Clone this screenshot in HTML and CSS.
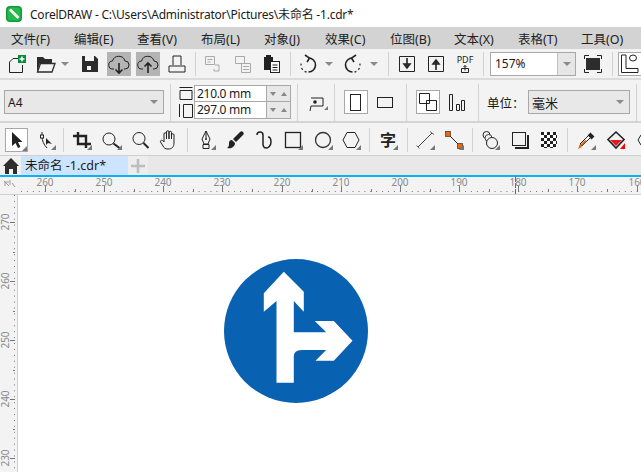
FILE: index.html
```html
<!DOCTYPE html>
<html lang="zh">
<head>
<meta charset="utf-8">
<title>CorelDRAW</title>
<link rel="stylesheet" href="styles.css">
</head>
<body>
<svg class="defs" width="0" height="0">
  <symbol id="corner" viewBox="0 0 5 5"><path d="M5 0V5H0Z"/></symbol>
</svg>
<header class="titlebar">
  <svg class="logo" width="16" height="16" viewBox="0 0 16 16"><rect width="16" height="16" rx="4" fill="#0f9d3a"/><rect x="1.5" y="1.5" width="13" height="13" rx="3" fill="#27b84f"/><path d="M4 3.5 12.5 12" stroke="#fff" stroke-width="2.6"/><path d="M4 3.5 12.5 12" stroke="#cfd8cf" stroke-width=".7"/></svg>
  <span class="title">CorelDRAW - C:\Users\Administrator\Pictures\未命名 -1.cdr*</span>
</header>
<nav class="menubar">
  <span class="m1">文件(F)</span><span class="m2">编辑(E)</span><span class="m3">查看(V)</span><span class="m4">布局(L)</span><span class="m5">对象(J)</span><span class="m6">效果(C)</span><span class="m7">位图(B)</span><span class="m8">文本(X)</span><span class="m9">表格(T)</span><span class="m10">工具(O)</span>
</nav>
<div class="toolbar std">
  <svg class="ic w24" viewBox="0 0 24 24"><path d="M5.500 10 9 6.500h6M5.500 10v10.500h13V13" class="ln"/><rect x="14" y="3" width="8" height="8" fill="#0a8a3a"/><path d="M18 4.500v5M15.500 7h5" stroke="#fff" stroke-width="1.500"/></svg>
  <svg class="ic w24 g5" viewBox="0 0 24 24"><path d="M4 20V5h6l2 2h7v4H7L4 20Z" fill="#2b2b2b"/><path d="M4.500 20 7.500 11.500H22l-3 8.500Z" fill="#f3f3f3" stroke="#2b2b2b" stroke-width="1.300"/></svg>
  <svg class="ic w8 g4" viewBox="0 0 8 24"><path d="M0 10h8l-4 4Z" fill="#8a8a8a"/></svg>
  <svg class="ic w24 g9" viewBox="0 0 24 24"><path d="M4 4h13l3 3v13H4Z" fill="#2b2b2b"/><rect x="7" y="4" width="9" height="5" fill="#f3f3f3"/><rect x="9" y="14" width="4" height="4" fill="#f3f3f3"/></svg>
  <span class="on g5"><svg class="ic w24" viewBox="0 0 24 24"><path d="M7 17H6a4 4 0 0 1-.5-8 6.500 6.500 0 0 1 12.500 0 4 4 0 0 1 0 8h-1" class="ln"/><path d="M12 11v10m-3.500-3.500 3.500 3.500 3.500-3.500" class="ln2"/></svg></span>
  <span class="on g5"><svg class="ic w24" viewBox="0 0 24 24"><path d="M7 17H6a4 4 0 0 1-.5-8 6.500 6.500 0 0 1 12.500 0 4 4 0 0 1 0 8h-1" class="ln"/><path d="M12 21V11m-3.500 3.500 3.500-3.500 3.500 3.500" class="ln2"/></svg></span>
  <svg class="ic w24 g5" viewBox="0 0 24 24"><path d="M8 13V4h8v9M4 14h16v6H4Z" class="ln"/></svg>
  <i class="sep s1"></i>
  <svg class="ic w24 dim" viewBox="0 0 24 24"><path d="M5.500 4.500h9v8h-9zM7.500 7.500h5M7.500 10h3M15 13h4v6h-5v-2" class="ln"/></svg>
  <svg class="ic w24 g7 dim" viewBox="0 0 24 24"><path d="M4.500 4.500h9v7h-9zM10.500 11.500h9v9h-9zM12 14.500h6M12 17.500h6" class="ln"/></svg>
  <svg class="ic w24 g5" viewBox="0 0 24 24"><path d="M4 5h9v13H4Z" fill="#222"/><rect x="6" y="3" width="5" height="3" fill="#222"/><rect x="10.500" y="9.500" width="9" height="11" fill="#fff" stroke="#222"/><path d="M12.500 13h5M12.500 15.500h5M12.500 18h5" stroke="#222"/></svg>
  <i class="sep s2"></i>
  <svg class="ic w24" viewBox="0 0 24 24"><path d="M12.500 6a7 7 0 0 1 0 14" class="ln2"/><path d="M10.500 20a7 7 0 0 1-5-9.500" fill="none" stroke="#333" stroke-width="1.300" stroke-dasharray="2 2.500"/><path d="M9 3l4.500 3.200L11 10" class="ln2"/></svg>
  <svg class="ic w8 g5" viewBox="0 0 8 24"><path d="M0 10h8l-4 4Z" fill="#8a8a8a"/></svg>
  <svg class="ic w24 g8" viewBox="0 0 24 24"><path d="M11.500 6a7 7 0 0 0 0 14" class="ln2"/><path d="M13.500 20a7 7 0 0 0 5-9.500" fill="none" stroke="#333" stroke-width="1.300" stroke-dasharray="2 2.500"/><path d="M15 3l-4.500 3.200L13 10" class="ln2"/></svg>
  <svg class="ic w8 g5" viewBox="0 0 8 24"><path d="M0 10h8l-4 4Z" fill="#8a8a8a"/></svg>
  <i class="sep s3"></i>
  <svg class="ic w24" viewBox="0 0 24 24"><path d="M4.500 4.500h15v15h-15z" class="ln"/><path d="M12 6v9M9 12h6l-3 4Z" class="ln2"/></svg>
  <svg class="ic w24 g5" viewBox="0 0 24 24"><path d="M4.500 4.500h15v15h-15z" class="ln"/><path d="M12 18V9M9 12h6l-3-4Z" class="ln2"/></svg>
  <span class="pdf g5"><span>PDF</span><svg width="8" height="8" viewBox="0 0 8 8"><path d="M.5 3.500h7v4h-7zM4 .5v5M2.500 2 4 .5 5.500 2" class="ln"/></svg></span>
  <i class="sep s4"></i>
  <span class="zoom"><span class="val">157%</span><span class="drop"></span></span>
  <svg class="ic w24 g5" viewBox="0 0 24 24"><rect x="5" y="6" width="14" height="12" fill="#2d2d2d"/><path d="M3.500 7V3.500H8M16 3.500h4.500V7M3.500 17v3.500H8M16 20.500h4.500V17" class="ln"/></svg>
  <i class="sep s5"></i>
  <span class="rulerbtn"><svg width="24" height="24" viewBox="0 0 24 24"><path d="M3.500 3v17.500H20v-4H8V3Z" class="ln"/><path d="M11.500 6a3.500 3 0 0 1 7 0 3.500 3 0 0 1-7 0Z" class="ln"/></svg></span>
</div>
<div class="toolbar prop">
  <span class="combo a4"><span>A4</span><b></b></span>
  <i class="sep s6"></i>
  <span class="pageicons">
    <svg width="14" height="14" viewBox="0 0 14 14"><path d="M.5 1.500h13M1 4.500h12v9H1Z" class="ln"/></svg>
    <svg width="14" height="15" viewBox="0 0 14 15"><path d="M.5 1v13M4.500 1.500h9v13h-9Z" class="ln"/></svg>
  </span>
  <span class="sizes">
    <span class="srow"><span class="num">210.0 mm</span><span class="spin"><u class="d"></u><u class="up"></u></span></span>
    <span class="srow"><span class="num">297.0 mm</span><span class="spin"><u class="d"></u><u class="up"></u></span></span>
  </span>
  <i class="sep s7"></i>
  <svg class="ic w24 g7" viewBox="0 0 24 24"><path d="M6 8h12v8H6l-1 5" class="ln"/><circle cx="10" cy="12" r="1.800" fill="#222"/><path d="M19 20h4v-4Z" fill="#777"/></svg>
  <i class="sep s8"></i>
  <span class="selbtn b1"><svg width="12" height="17" viewBox="0 0 12 17"><rect x=".5" y=".5" width="10" height="16" class="ln"/></svg></span>
  <svg class="ic land" width="18" height="12" viewBox="0 0 18 12"><rect x=".5" y="1.500" width="15" height="10" class="ln"/></svg>
  <i class="sep s9"></i>
  <span class="selbtn b2"><svg width="18" height="18" viewBox="0 0 18 18"><path d="M.5.500h10v10H.5zM7.500 7.500h10v10h-10z" class="ln"/></svg></span>
  <svg class="ic bars" width="18" height="17" viewBox="0 0 18 17"><path d="M1.500.500h3v16h-3zM8.500 10.500h3v6h-3zM13.500 6.500h3v10h-3z" class="ln"/></svg>
  <i class="sep s10"></i>
  <span class="unit">单位：</span>
  <span class="combo mm"><span>毫米</span><b></b></span>
  <i class="sep s11"></i>
</div>
<div class="toolbar box">
  <span class="selbtn arrow"><svg width="12" height="18" viewBox="0 0 12 18"><path d="M1 1v14l3.500-3 2.500 5 2.500-1-2.500-5h4.500Z" fill="#222"/></svg><svg class="cn"><use href="#corner"/></svg></span>
  <span class="tool t1"><svg width="24" height="24" viewBox="0 0 24 24"><path d="M8 4v4M8 8c0 5 2 9 5 12" class="ln"/><rect x="6.500" y="7" width="3" height="3" fill="#fff" stroke="#222"/><path d="M12 10v7l2-2 4 1Z" fill="#222"/></svg><svg class="cn"><use href="#corner"/></svg></span>
  <i class="sep s12"></i>
  <span class="tool t2"><svg width="24" height="24" viewBox="0 0 24 24"><path d="M8 4v12h13M3 8h13v12" fill="none" stroke="#222" stroke-width="2.400"/></svg><svg class="cn"><use href="#corner"/></svg></span>
  <span class="tool t3"><svg width="24" height="24" viewBox="0 0 24 24"><circle cx="9" cy="11" r="6" class="ln"/><path d="M13.500 15.500l6 4.500" stroke="#222" stroke-width="2"/></svg><svg class="cn"><use href="#corner"/></svg></span>
  <span class="tool t4"><svg width="24" height="24" viewBox="0 0 24 24"><circle cx="11" cy="10.500" r="6" class="ln"/><path d="M15.500 15l5 5" stroke="#222" stroke-width="2"/></svg></span>
  <span class="tool t5"><svg width="24" height="24" viewBox="0 0 24 24"><path d="M7 14V6a1.200 1.200 0 0 1 2.500 0v5V4a1.200 1.200 0 0 1 2.500 0v7-6.500a1.200 1.200 0 0 1 2.500 0V11 7a1.200 1.200 0 0 1 2.500 0v8c0 4-2 6-6 6-3 0-4-1-5-3l-2.500-4a1.300 1.300 0 0 1 2-1.500Z" class="ln"/></svg></span>
  <i class="sep s13"></i>
  <span class="tool t6"><svg width="24" height="24" viewBox="0 0 24 24"><path d="M12 3l-4 8 2 5h4l2-5Zm0 0v7M9 16.500h6v4H9Z" class="ln"/><circle cx="12" cy="11" r="1" fill="#222"/></svg><svg class="cn"><use href="#corner"/></svg></span>
  <span class="tool t7"><svg width="24" height="24" viewBox="0 0 24 24"><path d="M20 4c1 1 1 2 0 3l-7 7-3-3 7-7c1-1 2-1 3 0ZM9 12l3 3c0 4-4 6-8 5 2-1 2-3 2-5s1-3 3-3Z" fill="#222"/></svg></span>
  <span class="tool t8"><svg width="24" height="24" viewBox="0 0 24 24"><path d="M5 7c0-2 1-3 3-3s3 1 3 3v9c0 3 2 4 3.500 4s4.500-2 4.500-6-2-5-3-5" fill="none" stroke="#222" stroke-width="1.500"/></svg></span>
  <span class="tool t9"><svg width="24" height="24" viewBox="0 0 24 24"><rect x="4.500" y="4.500" width="15" height="15" fill="none" stroke="#222" stroke-width="1.300"/></svg><svg class="cn"><use href="#corner"/></svg></span>
  <span class="tool t10"><svg width="24" height="24" viewBox="0 0 24 24"><circle cx="12" cy="12" r="7.500" fill="none" stroke="#333" stroke-width="1.300"/></svg><svg class="cn"><use href="#corner"/></svg></span>
  <span class="tool t11"><svg width="24" height="24" viewBox="0 0 24 24"><path d="M8 4.500h8l4 7.500-4 7.500H8L4 12Z" class="ln"/></svg><svg class="cn"><use href="#corner"/></svg></span>
  <i class="sep s14"></i>
  <span class="tool t12"><span class="zi">字</span><svg class="cn"><use href="#corner"/></svg></span>
  <i class="sep s15"></i>
  <span class="tool t13"><svg width="24" height="24" viewBox="0 0 24 24"><path d="M5 19 19 5" stroke="#444"/><path d="M3.500 17.500l3 3M17 3.500l4 3" stroke="#666"/></svg><svg class="cn"><use href="#corner"/></svg></span>
  <span class="tool t14"><svg width="24" height="24" viewBox="0 0 24 24"><path d="M6 6l12 12" stroke="#222"/><rect x="3.500" y="3.500" width="5" height="5" fill="#e8690b" stroke="#222" stroke-width=".6"/><rect x="15.500" y="15.500" width="5" height="5" fill="#e8690b" stroke="#222" stroke-width=".6"/></svg><svg class="cn"><use href="#corner"/></svg></span>
  <i class="sep s16"></i>
  <span class="tool t15"><svg width="24" height="24" viewBox="0 0 24 24"><circle cx="8.500" cy="7" r="3.500" class="ln"/><circle cx="10.500" cy="10" r="3.500" fill="#f3f3f3" stroke="#444"/><circle cx="14" cy="15" r="5.500" fill="#f3f3f3" stroke="#222"/></svg><svg class="cn"><use href="#corner"/></svg></span>
  <span class="tool t16"><svg width="24" height="24" viewBox="0 0 24 24"><rect x="4.500" y="4.500" width="13" height="13" class="ln"/><path d="M20 7v13H7" fill="none" stroke="#222" stroke-width="2"/></svg></span>
  <span class="tool t17"><svg width="24" height="24" viewBox="0 0 24 24"><rect x="4" y="4" width="16" height="16" fill="#fff"/><path d="M4 4h3v3H4zM10 4h3v3h-3zM16 4h3v3h-3zM7 7h3v3H7zM13 7h3v3h-3zM19 7h1v3h-1zM4 10h3v3H4zM10 10h3v3h-3zM16 10h3v3h-3zM7 13h3v3H7zM13 13h3v3h-3zM19 13h1v3h-1zM4 16h3v3H4zM10 16h3v3h-3zM16 16h3v3h-3zM7 19h3v1H7zM13 19h3v1h-3z" fill="#222"/></svg></span>
  <i class="sep s17"></i>
  <span class="tool t18"><svg width="24" height="24" viewBox="0 0 24 24"><path d="M15 6l4 4" stroke="#222" stroke-width="4"/><path d="M14 8l-8 8 2 2 8-8" fill="#fff" stroke="#222"/><path d="M6 16l-2 5 4-2Z" fill="#d2691e"/><path d="M11 12l-5 5 2 1 5-5" fill="#d2691e"/></svg><svg class="cn"><use href="#corner"/></svg></span>
  <span class="tool t19"><svg width="24" height="24" viewBox="0 0 24 24"><path d="M12 4l8 7.500-8 8.500-8-8.500Z" class="ln2"/><path d="M6 12h12l-6 6Z" fill="#e01b24"/><path d="M16 21l5-6v6Z" fill="#f00"/></svg></span>
  <svg class="tail" width="4" height="24" viewBox="0 0 4 24"><path d="M4 7l-3 5 3 5" class="ln"/></svg>
</div>
<div class="tabs">
  <span class="home"><svg width="18" height="18" viewBox="0 0 18 18"><path d="M9 1 1 9h2v8h4v-5h4v5h4V9h2Z" fill="#2d2d2d"/></svg></span>
  <span class="tab">未命名 -1.cdr*</span>
  <span class="plus"><svg width="14" height="14" viewBox="0 0 14 14"><path d="M7 0v14M0 7h14" stroke="#bdbdbd" stroke-width="2.500"/></svg></span>
</div>
<svg class="hruler" width="641" height="18" viewBox="0 0 641 18">
  <path d="M4 4l5 5M5 9V5h4M10 3v5M12 6l3 4" stroke="#999" fill="none"/>
  <path d="M21 14.500H641" stroke="#777" stroke-dasharray="1 4.920"/>
  <path d="M45.500 9v6M104.500 9v6M163.500 9v6M222.500 9v6M282.500 9v6M341.500 9v6M400.500 9v6M459.500 9v6M518.500 9v6M577.500 9v6M637.500 9v6M75.500 12v3M134.500 12v3M193.500 12v3M252.500 12v3M312.500 12v3M371.500 12v3M430.500 12v3M489.500 12v3M548.500 12v3M607.500 12v3" stroke="#777"/>
  <path d="M515.500 0v18" stroke="#666" stroke-dasharray="5 1"/>
  <g class="rt">
    <text x="45" y="9">260</text><text x="104" y="9">250</text><text x="163" y="9">240</text><text x="222" y="9">230</text><text x="282" y="9">220</text><text x="341" y="9">210</text><text x="400" y="9">200</text><text x="459" y="9">190</text><text x="518" y="9">180</text><text x="577" y="9">170</text><text x="637" y="9">160</text>
  </g>
  <path d="M0 17.500H641" stroke="#cfcfcf"/>
</svg>
<div class="work">
  <svg class="vruler" width="18" height="277" viewBox="0 0 18 277">
    <path d="M14.500 0V277" stroke="#777" stroke-dasharray="1 4.920"/>
    <path d="M10 27.500h5M10 86.500h5M10 145.500h5M10 204.500h5M10 263.500h5M13 57.500h2M13 116.500h2M13 175.500h2M13 234.500h2" stroke="#777"/>
    <g class="rt">
      <text transform="translate(9 27) rotate(-90)">270</text><text transform="translate(9 86) rotate(-90)">260</text><text transform="translate(9 145) rotate(-90)">250</text><text transform="translate(9 204) rotate(-90)">240</text><text transform="translate(9 263) rotate(-90)">230</text>
    </g>
    <path d="M17.500 0V277" stroke="#cfcfcf"/>
  </svg>
  <div class="canvas">
    <svg class="sign" width="146" height="146" viewBox="222.500 258 146 146">
      <circle cx="295.500" cy="331" r="72" fill="#0861b1"/>
      <path d="M283.300 271.700 303.300 291.700V311.700L293.300 301V332.300Q293.300 332.300 300 332.300H325.700L314.300 321H333.300L352 340.700 333.300 360.700H315L325.700 350H301Q293.300 350 293.300 356.700V382.700H276V301L263.300 311.700V293.300Z" fill="#fff"/>
    </svg>
  </div>
</div>
</body>
</html>
```
FILE: styles.css
```css
* { box-sizing: border-box; }
html, body { margin: 0; padding: 0; }
body {
  width: 641px; height: 472px; overflow: hidden;
  background: #f3f3f3; color: #1a1a1a;
  font: 12px "Noto Sans", "Noto Sans CJK SC", sans-serif;
  position: relative;
}
.defs { position: absolute; }
.ln { fill: none; stroke: #222; stroke-width: 1; }
.ln2 { fill: none; stroke: #222; stroke-width: 1.6; }
.titlebar { height: 27px; background: #fff; display: flex; align-items: center; padding-left: 6px; }
.logo { margin-right: 8px; }
.title { font-size: 12px; letter-spacing: -.22px; white-space: nowrap; }

.menubar { height: 22px; background: #d3d3d3; display: flex; align-items: center; padding-left: 11px; font-size: 12.500px; color: #222; white-space: nowrap; }
.menubar span { display: block; }
.m1 { width: 63px; } .m2 { width: 63px; } .m3 { width: 64px; } .m4 { width: 63px; }
.m5 { width: 61px; } .m6 { width: 65px; } .m7 { width: 64px; } .m8 { width: 64px; } .m9 { width: 63px; }

.toolbar { display: flex; align-items: center; background: #f3f3f3; }
.std { height: 31px; padding-left: 4px; border-bottom: 2px solid #dcdcdc; }
.prop { height: 43px; padding: 3px 0 0 4px; border-bottom: 2px solid #d4d4d4; }
.box { height: 32px; padding: 2px 0 0 5px; }
.ic { display: block; flex: none; }
.w24 { width: 24px; height: 24px; }
.w8 { width: 8px; height: 24px; }
.g4 { margin-left: 4px; }
.g5 { margin-left: 5px; }
.g7 { margin-left: 7px; }
.g8 { margin-left: 8px; }
.g9 { margin-left: 9px; }
.dim { opacity: .35; }
.on { width: 24px; height: 24px; background: #b4b4b4; flex: none; }
.sep { display: block; flex: none; width: 1px; background: #d2d2d2; }
.s1, .s2, .s3, .s4, .s5 { height: 24px; }
.s1 { margin: 0 4px 0 6px; }
.s2 { margin: 0 5px 0 6px; }
.s3 { margin: 0 6px 0 10px; }
.s4 { margin: 0 6px; }
.s5 { margin: 0 5px 0 7px; }
.pdf { width: 24px; flex: none; display: flex; flex-direction: column; align-items: center; font-size: 9px; line-height: 10px; color: #222; }
.zoom { width: 86px; height: 24px; flex: none; display: flex; background: #fff; border: 1px solid #a8a8a8; }
.zoom .val { flex: 1; padding-left: 4px; line-height: 22px; }
.drop { width: 18px; background: #e6e6e6; border-left: 1px solid #c0c0c0; position: relative; }
.drop::after, .combo b::after { content: ""; position: absolute; left: 50%; top: 50%; margin: -2px 0 0 -4px; border: 4px solid transparent; border-top: 4px solid #8a8a8a; border-bottom: 0; }
.rulerbtn { width: 24px; height: 24px; flex: none; background: #fff; border: 1px solid #a8a8a8; }
.rulerbtn svg { display: block; margin: -1px; }

.combo { height: 24px; flex: none; background: #e8e8e8; border: 1px solid #a8a8a8; display: flex; align-items: center; justify-content: space-between; padding-left: 3px; position: relative; }
.combo b { display: block; width: 18px; height: 22px; position: relative; }
.a4 { width: 160px; }
.mm { width: 102px; font-size: 13px; }
.prop .sep { height: 37px; }
.s6 { margin: 0 8px 0 6px; }
.pageicons { display: flex; flex-direction: column; gap: 3px; flex: none; width: 14px; margin-right: 1px; }
.pageicons svg { display: block; }
.sizes { display: flex; flex-direction: column; flex: none; width: 97px; border: 1px solid #a8a8a8; background: #fff; font-size: 12px; letter-spacing: -.3px; }
.srow { display: flex; height: 15px; }
.srow + .srow { border-top: 1px solid #a8a8a8; height: 17px; }
.num { flex: 1; padding-left: 2px; line-height: 15px; }
.spin { width: 24px; background: #e8e8e8; border-left: 1px solid #a8a8a8; display: flex; align-items: center; justify-content: space-around; }
.spin u { display: block; border: 3px solid transparent; }
.spin .d { border-top: 4px solid #888; border-bottom: 0; }
.spin .up { border-bottom: 4px solid #888; border-top: 0; }
.s7 { margin-left: 6px; }
.s8 { margin: 0 9px 0 5px; }
.selbtn { flex: none; display: flex; align-items: center; justify-content: center; background: #fff; border: 1px solid #a8a8a8; position: relative; }
.b1, .b2 { width: 24px; height: 24px; }
.land { margin-left: 9px; }
.s9 { margin: 0 9px 0 11px; }
.bars { margin-left: 8px; }
.s10 { margin: 0 8px 0 12px; }
.unit { width: 41px; flex: none; font-size: 12.500px; white-space: nowrap; }
.s11 { margin-left: 6px; }

.box .sep { height: 24px; }
.arrow { width: 23px; height: 24px; flex: none; }
.tool { flex: none; width: 24px; height: 24px; position: relative; display: block; margin-left: 5px; }
.tool svg { display: block; }
.cn { position: absolute; width: 5px; height: 5px; right: 2px; bottom: 2px; fill: #777; }
.arrow .cn { right: 0; bottom: 0; }
.t1 { margin-left: 6px; }
.t2, .t6, .t12, .t13, .t15, .t18 { margin-left: 0; }
.t3, .t10, .t16, .t19 { margin-left: 6px; }
.t4, .t11 { margin-left: 4px; }
.s12 { margin: 0 6px 0 5px; }
.s13 { margin: 0 6px; }
.s14 { margin: 0 6px; }
.s15 { margin: 0 5px 0 7px; }
.s16 { margin: 0 5px 0 6px; }
.s17 { margin: 0 6px; }
.zi { display: block; text-align: center; font-size: 16px; line-height: 24px; font-weight: 700; color: #222; }
.tail { flex: none; margin-left: 9px; }

.tabs { height: 22px; background: #e8e8e8; border-top: 1px solid #d0d0d0; border-bottom: 2px solid #0db0f0; display: flex; }
.home { width: 21px; display: flex; align-items: center; justify-content: center; background: #f0f0f0; }
.tab { width: 107px; background: #cce4ff; padding-left: 4px; line-height: 19px; font-size: 12.500px; white-space: nowrap; }
.plus { width: 20px; display: flex; align-items: center; justify-content: center; background: #ededed; }

.hruler { display: block; background: #f3f3f3; overflow: visible; }
.rt text { font: 10px "Noto Sans", sans-serif; fill: #8a8a8a; text-anchor: middle; }
.work { display: flex; height: 277px; }
.vruler { display: block; flex: none; background: #f3f3f3; overflow: visible; }
.canvas { flex: 1; background: #fff; }
.sign { position: absolute; left: 222.500px; top: 258px; }
```
